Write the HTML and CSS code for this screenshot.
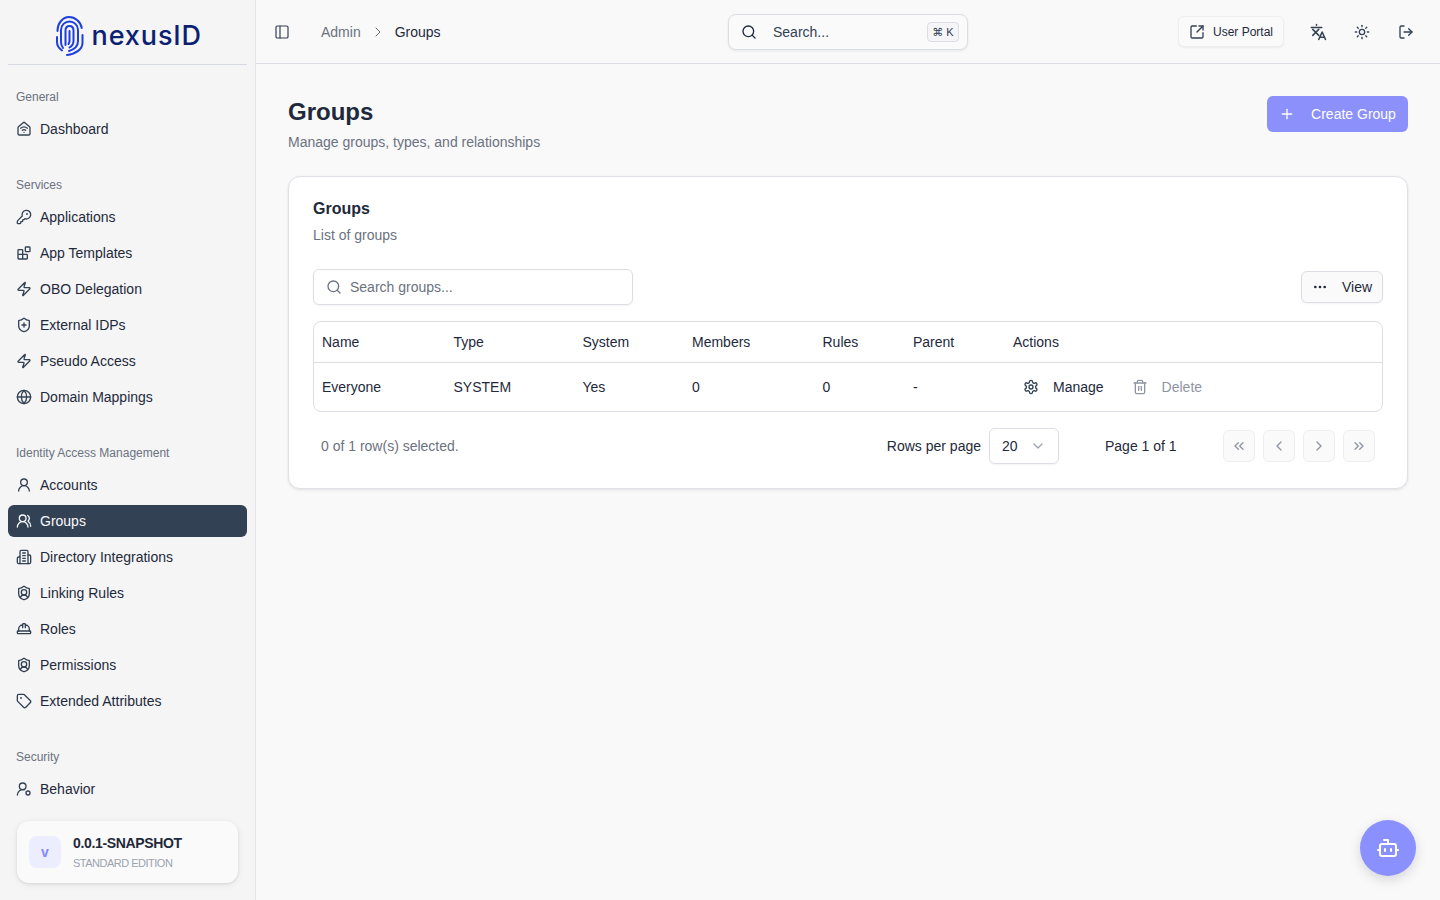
FILE: index.html
```html
<!DOCTYPE html>
<html lang="en">
<head>
<meta charset="utf-8">
<title>Groups - nexusID</title>
<link rel="stylesheet" href="styles.css">
</head>
<body>
<svg class="sprite" xmlns="http://www.w3.org/2000/svg">
  <symbol id="i-house" viewBox="0 0 24 24"><path d="M9.5 13.866a4 4 0 0 1 5 .01"/><path d="M12 17h.01"/><path d="M3 10a2 2 0 0 1 .709-1.528l7-6a2 2 0 0 1 2.582 0l7 6A2 2 0 0 1 21 10v9a2 2 0 0 1-2 2H5a2 2 0 0 1-2-2z"/><path d="M7 10.754a8 8 0 0 1 10 0"/></symbol>
  <symbol id="i-key" viewBox="0 0 24 24"><path d="M2.586 17.414A2 2 0 0 0 2 18.828V21a1 1 0 0 0 1 1h3a1 1 0 0 0 1-1v-1a1 1 0 0 1 1-1h1a1 1 0 0 0 1-1v-1a1 1 0 0 1 1-1h.172a2 2 0 0 0 1.414-.586l.814-.814a6.5 6.5 0 1 0-4-4z"/><circle cx="16.5" cy="7.5" r=".5"/></symbol>
  <symbol id="i-blocks" viewBox="0 0 24 24"><rect x="14" y="3" width="7" height="7" rx="1"/><path d="M10 21V8a1 1 0 0 0-1-1H4a1 1 0 0 0-1 1v12a1 1 0 0 0 1 1h12a1 1 0 0 0 1-1v-5a1 1 0 0 0-1-1H3"/></symbol>
  <symbol id="i-zap" viewBox="0 0 24 24"><path d="M4 14a1 1 0 0 1-.78-1.63l9.9-10.2a.5.5 0 0 1 .86.46l-1.92 6.02A1 1 0 0 0 13 10h7a1 1 0 0 1 .78 1.63l-9.9 10.2a.5.5 0 0 1-.86-.46l1.92-6.02A1 1 0 0 0 11 14z"/></symbol>
  <symbol id="i-shield-plus" viewBox="0 0 24 24"><path d="M20 13c0 5-3.5 7.5-7.66 8.95a1 1 0 0 1-.67-.01C7.5 20.5 4 18 4 13V6a1 1 0 0 1 1-1c2 0 4.5-1.2 6.24-2.72a1.17 1.17 0 0 1 1.52 0C14.51 3.81 17 5 19 5a1 1 0 0 1 1 1z"/><path d="M9 12h6"/><path d="M12 9v6"/></symbol>
  <symbol id="i-globe" viewBox="0 0 24 24"><circle cx="12" cy="12" r="10"/><path d="M12 2a14.5 14.5 0 0 0 0 20 14.5 14.5 0 0 0 0-20"/><path d="M2 12h20"/></symbol>
  <symbol id="i-user" viewBox="0 0 24 24"><circle cx="12" cy="8" r="5"/><path d="M20 21a8 8 0 0 0-16 0"/></symbol>
  <symbol id="i-users" viewBox="0 0 24 24"><path d="M18 21a8 8 0 0 0-16 0"/><circle cx="10" cy="8" r="5"/><path d="M22 20c0-3.37-2-6.5-4-8a5 5 0 0 0-.45-8.3"/></symbol>
  <symbol id="i-building" viewBox="0 0 24 24"><path d="M6 22V4a2 2 0 0 1 2-2h8a2 2 0 0 1 2 2v18Z"/><path d="M6 12H4a2 2 0 0 0-2 2v6a2 2 0 0 0 2 2h2"/><path d="M18 9h2a2 2 0 0 1 2 2v9a2 2 0 0 1-2 2h-2"/><path d="M10 6h4"/><path d="M10 10h4"/><path d="M10 14h4"/><path d="M10 18h4"/></symbol>
  <symbol id="i-shield-user" viewBox="0 0 24 24"><path d="M20 13c0 5-3.5 7.5-7.66 8.95a1 1 0 0 1-.67-.01C7.5 20.5 4 18 4 13V6a1 1 0 0 1 1-1c2 0 4.5-1.2 6.24-2.72a1.17 1.17 0 0 1 1.52 0C14.51 3.81 17 5 19 5a1 1 0 0 1 1 1z"/><path d="M6.376 18.91a6 6 0 0 1 11.249.003"/><circle cx="12" cy="11" r="4"/></symbol>
  <symbol id="i-hat" viewBox="0 0 24 24"><path d="M10 10V5a1 1 0 0 1 1-1h2a1 1 0 0 1 1 1v5"/><path d="M14 6a6 6 0 0 1 6 6v3"/><path d="M4 15v-3a6 6 0 0 1 6-6"/><rect x="2" y="15" width="20" height="4" rx="1"/></symbol>
  <symbol id="i-tag" viewBox="0 0 24 24"><path d="M12.586 2.586A2 2 0 0 0 11.172 2H4a2 2 0 0 0-2 2v7.172a2 2 0 0 0 .586 1.414l8.704 8.704a2.426 2.426 0 0 0 3.42 0l6.58-6.58a2.426 2.426 0 0 0 0-3.42z"/><circle cx="7.5" cy="7.5" r=".5"/></symbol>
  <symbol id="i-behavior" viewBox="0 0 24 24"><path d="M2 21a8 8 0 0 1 10.434-7.62"/><circle cx="10" cy="8" r="5"/><circle cx="18" cy="18" r="3"/></symbol>
  <symbol id="i-panel" viewBox="0 0 24 24"><rect x="3" y="3" width="18" height="18" rx="2"/><path d="M9 3v18"/></symbol>
  <symbol id="i-search" viewBox="0 0 24 24"><path d="m21 21-4.34-4.34"/><circle cx="11" cy="11" r="8"/></symbol>
  <symbol id="i-ext" viewBox="0 0 24 24"><path d="M21 13v6a2 2 0 0 1-2 2H5a2 2 0 0 1-2-2V5a2 2 0 0 1 2-2h6"/><path d="m21 3-9 9"/><path d="M15 3h6v6"/></symbol>
  <symbol id="i-lang" viewBox="0 0 24 24"><path d="M10 2v1"/><path d="M3 6h14"/><path d="m5 8.5 8 8"/><path d="m5 16.500 8-8"/><path d="m13 22 4.500-10 4.500 10"/><path d="M14.500 19h6"/></symbol>
  <symbol id="i-sun" viewBox="0 0 24 24"><circle cx="12" cy="12" r="4"/><path d="M12 2v2"/><path d="M12 20v2"/><path d="m4.930 4.930 1.410 1.410"/><path d="m17.660 17.660 1.410 1.410"/><path d="M2 12h2"/><path d="M20 12h2"/><path d="m6.340 17.660-1.410 1.410"/><path d="m19.070 4.930-1.410 1.410"/></symbol>
  <symbol id="i-logout" viewBox="0 0 24 24"><path d="M9 21H5a2 2 0 0 1-2-2V5a2 2 0 0 1 2-2h4"/><path d="m16 17 5-5-5-5"/><path d="M21 12H9"/></symbol>
  <symbol id="i-plus" viewBox="0 0 24 24"><path d="M5 12h14"/><path d="M12 5v14"/></symbol>
  <symbol id="i-dots" viewBox="0 0 24 24"><circle cx="12" cy="12" r="1"/><circle cx="19" cy="12" r="1"/><circle cx="5" cy="12" r="1"/></symbol>
  <symbol id="i-cog" viewBox="0 0 24 24"><path d="M12.220 2h-.44a2 2 0 0 0-2 2v.18a2 2 0 0 1-1 1.730l-.43.25a2 2 0 0 1-2 0l-.15-.08a2 2 0 0 0-2.730.73l-.22.38a2 2 0 0 0 .73 2.730l.15.1a2 2 0 0 1 1 1.720v.51a2 2 0 0 1-1 1.740l-.15.09a2 2 0 0 0-.73 2.730l.22.38a2 2 0 0 0 2.730.73l.15-.08a2 2 0 0 1 2 0l.43.25a2 2 0 0 1 1 1.730V20a2 2 0 0 0 2 2h.44a2 2 0 0 0 2-2v-.18a2 2 0 0 1 1-1.730l.43-.25a2 2 0 0 1 2 0l.15.08a2 2 0 0 0 2.730-.73l.22-.39a2 2 0 0 0-.73-2.730l-.15-.08a2 2 0 0 1-1-1.740v-.5a2 2 0 0 1 1-1.740l.15-.09a2 2 0 0 0 .73-2.730l-.22-.38a2 2 0 0 0-2.730-.73l-.15.08a2 2 0 0 1-2 0l-.43-.25a2 2 0 0 1-1-1.730V4a2 2 0 0 0-2-2z"/><circle cx="12" cy="12" r="3"/></symbol>
  <symbol id="i-trash" viewBox="0 0 24 24"><path d="M3 6h18"/><path d="M19 6v14c0 1-1 2-2 2H7c-1 0-2-1-2-2V6"/><path d="M8 6V4c0-1 1-2 2-2h4c1 0 2 1 2 2v2"/><path d="M10 11v6"/><path d="M14 11v6"/></symbol>
  <symbol id="i-cl2" viewBox="0 0 24 24"><path d="m11 17-5-5 5-5"/><path d="m18 17-5-5 5-5"/></symbol>
  <symbol id="i-cr2" viewBox="0 0 24 24"><path d="m6 17 5-5-5-5"/><path d="m13 17 5-5-5-5"/></symbol>
  <symbol id="i-cl" viewBox="0 0 24 24"><path d="m15 18-6-6 6-6"/></symbol>
  <symbol id="i-cr" viewBox="0 0 24 24"><path d="m9 18 6-6-6-6"/></symbol>
  <symbol id="i-cd" viewBox="0 0 24 24"><path d="m6 9 6 6 6-6"/></symbol>
  <symbol id="i-bot" viewBox="0 0 24 24"><path d="M12 8V4H8"/><rect x="4" y="8" width="16" height="12" rx="2"/><path d="M2 14h2"/><path d="M20 14h2"/><path d="M15 13v2"/><path d="M9 13v2"/></symbol>
</svg>

<div class="app">
  <aside class="sidebar">
    <div class="brand">
      <svg class="brand-mark" viewBox="0 0 28 40" fill="none">
        <path d="M1.500 15C1.500 7 7 1 13 1C19 1 25 6 25.700 12"/>
        <path d="M26.500 19V27C26.500 33 20 38 11 39"/>
        <path d="M1 21V26C1 29 2.500 32 6 34.500"/>
        <path d="M7 32C5.500 30 5 28 5 26V14C5 9 9 5.500 13.500 5.500C18 5.500 22 9 22 14V25C22 30 18 33.500 13 35"/>
        <path d="M9.500 29V14.500C9.500 11.500 11 10 13.500 10C16 10 17.500 11.500 17.500 14.500V25C17.500 28 16 30 13.500 31.500"/>
        <path d="M13.500 15V25C13.500 26.500 13 27 12.500 28"/>
      </svg>
      <span class="brand-name">nexusID</span>
    </div>
    <nav class="nav">
      <section class="nav-group">
        <h3 class="nav-label">General</h3>
        <a class="nav-item"><svg class="ico"><use href="#i-house"/></svg>Dashboard</a>
      </section>
      <section class="nav-group">
        <h3 class="nav-label">Services</h3>
        <a class="nav-item"><svg class="ico"><use href="#i-key"/></svg>Applications</a>
        <a class="nav-item"><svg class="ico"><use href="#i-blocks"/></svg>App Templates</a>
        <a class="nav-item"><svg class="ico"><use href="#i-zap"/></svg>OBO Delegation</a>
        <a class="nav-item"><svg class="ico"><use href="#i-shield-plus"/></svg>External IDPs</a>
        <a class="nav-item"><svg class="ico"><use href="#i-zap"/></svg>Pseudo Access</a>
        <a class="nav-item"><svg class="ico"><use href="#i-globe"/></svg>Domain Mappings</a>
      </section>
      <section class="nav-group">
        <h3 class="nav-label">Identity Access Management</h3>
        <a class="nav-item"><svg class="ico"><use href="#i-user"/></svg>Accounts</a>
        <a class="nav-item active"><svg class="ico"><use href="#i-users"/></svg>Groups</a>
        <a class="nav-item"><svg class="ico"><use href="#i-building"/></svg>Directory Integrations</a>
        <a class="nav-item"><svg class="ico"><use href="#i-shield-user"/></svg>Linking Rules</a>
        <a class="nav-item"><svg class="ico"><use href="#i-hat"/></svg>Roles</a>
        <a class="nav-item"><svg class="ico"><use href="#i-shield-user"/></svg>Permissions</a>
        <a class="nav-item"><svg class="ico"><use href="#i-tag"/></svg>Extended Attributes</a>
      </section>
      <section class="nav-group">
        <h3 class="nav-label">Security</h3>
        <a class="nav-item"><svg class="ico"><use href="#i-behavior"/></svg>Behavior</a>
      </section>
    </nav>
    <div class="version-wrap">
      <div class="version">
        <div class="version-badge">v</div>
        <div class="version-text">
          <div class="version-num">0.0.1-SNAPSHOT</div>
          <div class="version-ed">STANDARD EDITION</div>
        </div>
      </div>
    </div>
  </aside>

  <div class="main">
    <header class="topbar">
      <div class="topbar-left">
        <svg class="ico panel-ico"><use href="#i-panel"/></svg>
        <span class="crumb">Admin</span>
        <svg class="ico crumb-sep"><use href="#i-cr"/></svg>
        <span class="crumb-current">Groups</span>
      </div>
      <div class="cmd-search">
        <svg class="ico"><use href="#i-search"/></svg>
        <span class="cmd-text">Search...</span>
        <kbd class="cmd-kbd">⌘ K</kbd>
      </div>
      <div class="topbar-right">
        <button class="portal-btn"><svg class="ico"><use href="#i-ext"/></svg>User Portal</button>
        <button class="icon-btn"><svg class="ico ico-lang"><use href="#i-lang"/></svg></button>
        <button class="icon-btn"><svg class="ico"><use href="#i-sun"/></svg></button>
        <button class="icon-btn"><svg class="ico"><use href="#i-logout"/></svg></button>
      </div>
    </header>

    <main class="content">
      <div class="page-head">
        <div>
          <h1 class="page-title">Groups</h1>
          <p class="page-sub">Manage groups, types, and relationships</p>
        </div>
        <button class="create-btn"><svg class="ico"><use href="#i-plus"/></svg>Create Group</button>
      </div>

      <section class="card">
        <h2 class="card-title">Groups</h2>
        <p class="card-sub">List of groups</p>

        <div class="toolbar">
          <div class="filter"><svg class="ico"><use href="#i-search"/></svg><span>Search groups...</span></div>
          <button class="view-btn"><svg class="ico"><use href="#i-dots"/></svg>View</button>
        </div>

        <div class="table">
          <div class="row head">
            <div>Name</div><div>Type</div><div>System</div><div>Members</div><div>Rules</div><div>Parent</div><div>Actions</div>
          </div>
          <div class="row body">
            <div>Everyone</div><div>SYSTEM</div><div>Yes</div><div>0</div><div>0</div><div>-</div>
            <div class="actions">
              <span class="act"><svg class="ico"><use href="#i-cog"/></svg>Manage</span>
              <span class="act disabled"><svg class="ico"><use href="#i-trash"/></svg>Delete</span>
            </div>
          </div>
        </div>

        <div class="pager">
          <span class="selected">0 of 1 row(s) selected.</span>
          <div class="pager-right">
            <span class="rows-label">Rows per page</span>
            <div class="rows-select"><span>20</span><svg class="ico"><use href="#i-cd"/></svg></div>
            <span class="page-info">Page 1 of 1</span>
            <div class="page-btns">
              <button class="page-btn"><svg class="ico"><use href="#i-cl2"/></svg></button>
              <button class="page-btn"><svg class="ico"><use href="#i-cl"/></svg></button>
              <button class="page-btn"><svg class="ico"><use href="#i-cr"/></svg></button>
              <button class="page-btn"><svg class="ico"><use href="#i-cr2"/></svg></button>
            </div>
          </div>
        </div>
      </section>
    </main>
  </div>
</div>

<button class="fab"><svg class="ico"><use href="#i-bot"/></svg></button>
</body>
</html>
```

FILE: styles.css
```css
* { box-sizing: border-box; }
html, body { margin: 0; height: 100%; }
body {
  font-family: "Liberation Sans", Arial, sans-serif;
  font-size: 14px;
  line-height: 20px;
  color: #1e293b;
  background: #f9f9f9;
  overflow: hidden;
}
h1, h2, h3, p { margin: 0; }
button { font: inherit; color: inherit; cursor: pointer; padding: 0; background: none; border: 0; }
.sprite { display: none; }
.ico {
  width: 16px; height: 16px; flex: none;
  fill: none; stroke: currentColor; stroke-width: 2;
  stroke-linecap: round; stroke-linejoin: round;
}

.app { display: flex; height: 900px; }

/* sidebar */
.sidebar {
  width: 256px; flex: none; height: 900px;
  display: flex; flex-direction: column;
  background: #f5f5f5;
  border-right: 1px solid #e2e4ea;
}
.brand {
  height: 65px; margin: 0 8px; flex: none;
  display: flex; align-items: center; justify-content: center; gap: 8px;
  border-bottom: 1px solid #d5d9e3;
}
.brand-mark { width: 28px; height: 40px; stroke: #1d3fe0; stroke-width: 2; stroke-linecap: round; margin-top: 7px; }
.brand-name {
  font-family: Inter, "Liberation Sans", sans-serif;
  font-size: 27px; line-height: 36px; font-weight: 500;
  color: #0c1f73; letter-spacing: .9px;
  width: 108px; white-space: nowrap; margin-top: 8px;
}
.nav {
  flex: 1; min-height: 0; overflow: hidden;
  padding: 16px 8px 0;
  display: flex; flex-direction: column; gap: 24px;
}
.nav-group { display: flex; flex-direction: column; gap: 4px; flex: none; }
.nav-label {
  height: 32px; margin-bottom: -4px; padding: 0 8px;
  display: flex; align-items: center;
  font-size: 12px; font-weight: 400; color: #6b7280;
}
.nav-item {
  height: 32px; padding: 0 8px; border-radius: 6px;
  display: flex; align-items: center; gap: 8px;
  color: #1e293b; white-space: nowrap;
}
.nav-item .ico { color: #334155; }
.nav-item.active { background: #334155; color: #f8fafc; }
.nav-item.active .ico { color: #f8fafc; }

.version-wrap { flex: none; padding: 8px 17px 17px; }
.version {
  height: 62px; padding: 0 12px;
  display: flex; align-items: center; gap: 12px;
  background: #fafafa; border-radius: 12px;
  box-shadow: 0 1px 3px rgba(15, 23, 42, .1), 0 2px 8px rgba(15, 23, 42, .06);
}
.version-badge {
  width: 32px; height: 32px; border-radius: 8px;
  background: #eceeff; color: #8188fb;
  display: flex; align-items: center; justify-content: center;
  font-size: 14px; font-weight: 700;
}
.version-num { font-size: 14px; line-height: 20px; font-weight: 700; letter-spacing: -.35px; color: #1e293b; }
.version-ed { font-size: 11px; line-height: 16px; color: #9ca3af; letter-spacing: -.5px; margin-top: 2px; }

/* top bar */
.main { flex: 1; min-width: 0; display: flex; flex-direction: column; }
.topbar {
  height: 64px; flex: none; padding: 0 16px;
  display: grid; grid-template-columns: 1fr 240px 1fr; align-items: center;
  border-bottom: 1px solid #dcdee6;
}
.topbar-left { display: flex; align-items: center; }
.panel-ico { color: #334155; margin: 0 31px 0 2px; stroke-width: 1.8; }
.crumb { color: #6b7280; }
.crumb-sep { color: #6b7280; margin: 0 9px; stroke-width: 1.5; }
.crumb-current { color: #1e293b; }
.cmd-search {
  height: 36px; padding: 0 8px 0 12px;
  display: flex; align-items: center;
  background: #fafafa; border: 1px solid #dcdee6; border-radius: 8px;
  box-shadow: 0 1px 3px rgba(15, 23, 42, .08);
}
.cmd-search .ico { color: #1e293b; }
.cmd-text { margin-left: 16px; flex: 1; color: #334155; }
.cmd-kbd {
  height: 20px; width: 32px; border: 1px solid #dcdee6; border-radius: 4px;
  display: flex; align-items: center; justify-content: center;
  background: #f5f5f7; color: #334155;
  font-family: "Liberation Sans", "DejaVu Sans", sans-serif; font-size: 11px;
}
.topbar-right { display: flex; align-items: center; justify-content: flex-end; }
.portal-btn {
  height: 31px; width: 106px; margin-right: 12px;
  display: flex; align-items: center; justify-content: center; gap: 8px;
  font-size: 12px; border: 1px solid #eceef2; border-radius: 6px; background: #fafafa;
  box-shadow: 0 1px 2px rgba(15, 23, 42, .05);
}
.portal-btn .ico { color: #334155; }
.icon-btn { width: 44px; height: 32px; display: flex; align-items: center; justify-content: center; color: #334155; }
.icon-btn:last-child { margin-right: -4px; }
.ico-lang { width: 18px; height: 18px; }

/* content */
.content { flex: 1; padding: 32px; min-height: 0; }
.page-head { display: flex; justify-content: space-between; align-items: flex-start; height: 80px; }
.page-title { font-size: 24px; line-height: 32px; font-weight: 700; color: #1e293b; }
.page-sub { color: #6b7280; margin-top: 2px; line-height: 24px; }
.create-btn {
  width: 141px; height: 36px; border-radius: 6px;
  background: #8b90fb; color: #fff;
  display: flex; align-items: center; justify-content: center; gap: 16px;
}
.card {
  height: 313px; padding: 20px 24px 0;
  background: #fff; border: 1px solid #dfe1e8; border-radius: 12px;
  box-shadow: 0 1px 3px rgba(15, 23, 42, .1);
}
.card-title { font-size: 16px; line-height: 24px; font-weight: 700; color: #1e293b; }
.card-sub { color: #6b7280; margin-top: 4px; line-height: 20px; }
.toolbar { display: flex; justify-content: space-between; align-items: center; margin-top: 24px; height: 36px; }
.filter {
  width: 320px; height: 36px; padding: 0 12px;
  display: flex; align-items: center; gap: 8px;
  border: 1px solid #dcdee6; border-radius: 6px; color: #6b7280;
  box-shadow: 0 1px 2px rgba(15, 23, 42, .05);
}
.view-btn {
  width: 82px; height: 32px;
  display: flex; align-items: center; justify-content: center; gap: 14px;
  background: #fafafa; border: 1px solid #dcdee6; border-radius: 6px;
  box-shadow: 0 1px 2px rgba(15, 23, 42, .05);
}

.table { margin-top: 16px; border: 1px solid #dcdee6; border-radius: 8px; }
.row {
  display: grid;
  grid-template-columns: 131.5px 129px 109.5px 130.500px 90.500px 100px 1fr;
  align-items: center;
}
.row > div { padding: 0 8px; white-space: nowrap; }
.row.head { height: 41px; border-bottom: 1px solid #dcdee6; }
.row.body { height: 48px; }
.actions { display: flex; align-items: center; }
.act { display: flex; align-items: center; gap: 14px; height: 32px; padding: 0 10px; }
.act .ico { color: #334155; }
.act.disabled { color: #8f95a3; margin-left: 8px; }
.act.disabled .ico { color: #8f95a3; }

.pager { display: flex; align-items: center; justify-content: space-between; height: 36px; margin-top: 16px; padding: 0 8px; }
.selected { color: #6b7280; }
.pager-right { display: flex; align-items: center; }
.rows-label { margin-right: 8px; }
.rows-select {
  width: 70px; height: 36px; padding: 0 12px;
  display: flex; align-items: center; justify-content: space-between;
  border: 1px solid #dcdee6; border-radius: 6px;
  box-shadow: 0 1px 2px rgba(15, 23, 42, .05);
}
.rows-select .ico { color: #9ca3af; }
.page-info { width: 164px; padding-left: 46px; }
.page-btns { display: flex; gap: 8px; }
.page-btn {
  width: 32px; height: 32px; border: 1px solid #eceef2; border-radius: 6px; background: #fafafa;
  display: flex; align-items: center; justify-content: center; color: #8f95a3;
}

.fab {
  position: fixed; right: 24px; bottom: 24px;
  width: 56px; height: 56px; border-radius: 50%;
  background: #8b90ff; color: #fff;
  display: flex; align-items: center; justify-content: center;
  box-shadow: 0 4px 12px rgba(15, 23, 42, .15);
}
.fab .ico { width: 24px; height: 24px; }
```
